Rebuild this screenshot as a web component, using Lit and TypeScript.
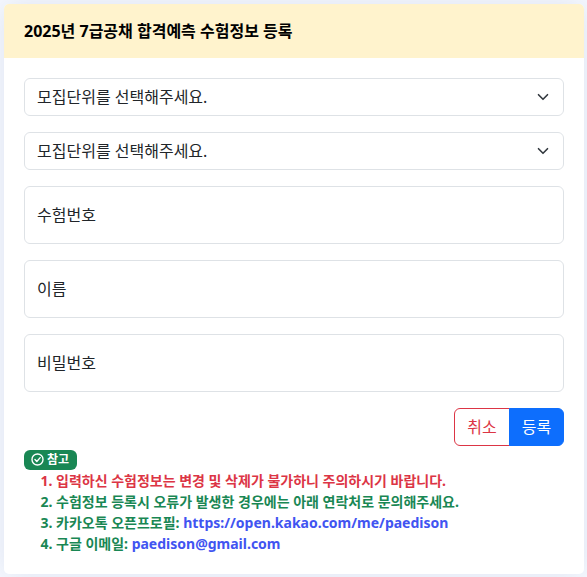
import { LitElement, html, css } from "lit";
import { customElement } from "lit/decorators.js";

const SELECT_PROMPT = "모집단위를 선택해주세요.";
const FIELDS = [
  { label: "수험번호", type: "text" },
  { label: "이름", type: "text" },
  { label: "비밀번호", type: "password" },
];

@customElement("app-root")
export class AppRoot extends LitElement {
  static styles = css`
    :host {
      display: block;
      box-sizing: border-box;
      height: 577px;
      padding: 4px 3px 3px 4px;
      background: #f6f9ff;
      overflow: hidden;
      font-family: "Noto Sans", "Noto Sans CJK KR", sans-serif;
      font-size: 16px;
      line-height: 24px;
      color: #212529;
    }
    * {
      box-sizing: border-box;
    }
    .card {
      height: 570px;
      border-radius: 5px;
      background: #fff;
      box-shadow: 0 0 30px rgba(1, 41, 112, 0.1);
      overflow: hidden;
    }
    .head {
      height: 54px;
      margin: 0;
      padding: 15px 20px;
      background: #fff3cd;
      color: #000;
      font-size: 16px;
      font-weight: 700;
      line-height: 24px;
    }
    .body {
      display: flex;
      flex-direction: column;
      padding: 20px;
    }
    .form {
      display: flex;
      flex-direction: column;
      gap: 16px;
    }
    .pick {
      display: grid;
      align-items: center;
    }
    .pick > * {
      grid-area: 1 / 1;
    }
    .chevron {
      justify-self: end;
      width: 16px;
      height: 12px;
      margin-right: 13px;
      pointer-events: none;
    }
    .control {
      width: 100%;
      height: 38px;
      margin: 0;
      padding: 0 12px;
      border: 1px solid #dee2e6;
      border-radius: 6px;
      background: #fff;
      color: #212529;
      font: inherit;
      appearance: none;
      outline: none;
    }
    .tall {
      height: 58px;
    }
    .control::placeholder {
      color: #212529;
      opacity: 1;
    }
    .actions {
      display: flex;
      justify-content: flex-end;
    }
    .btn {
      width: 55px;
      height: 38px;
      padding: 0;
      border: 1px solid #0d6efd;
      border-radius: 0 6px 6px 0;
      background: #0d6efd;
      color: #fff;
      font: inherit;
    }
    .cancel {
      width: 56px;
      margin-right: -1px;
      border-color: #dc3545;
      border-radius: 6px 0 0 6px;
      background: #fff;
      color: #dc3545;
    }
    .badge {
      display: flex;
      align-items: center;
      align-self: flex-start;
      gap: 3px;
      width: 53px;
      height: 20px;
      margin-top: 4px;
      padding-left: 7px;
      border-radius: 6px;
      background: #198754;
      color: #fff;
      font-size: 12px;
      font-weight: 700;
      line-height: 20px;
    }
    .check {
      margin-top: -1px;
    }
    .notes {
      margin: 0;
      padding: 0 0 0 32px;
      color: #198754;
      font-size: 14px;
      font-weight: 700;
      line-height: 21px;
    }
    .warn {
      color: #dc3545;
    }
    .link {
      color: #4154f1;
      text-decoration: none;
    }
  `;

  private select() {
    return html`<div class="pick">
      <select class="control"><option>${SELECT_PROMPT}</option></select>
      <svg class="chevron" viewBox="0 0 16 16" preserveAspectRatio="xMidYMid meet" fill="none">
        <path d="m2 5 6 6 6-6" stroke="#343a40" stroke-width="2.2" stroke-linecap="round" stroke-linejoin="round" />
      </svg>
    </div>`;
  }

  render() {
    return html`<section class="card">
      <h1 class="head">2025년 7급공채 합격예측 수험정보 등록</h1>
      <div class="body">
        <form class="form">
          ${this.select()} ${this.select()}
          ${FIELDS.map((f) => html`<input class="control tall" type=${f.type} placeholder=${f.label} />`)}
          <div class="actions">
            <button class="btn cancel" type="button">취소</button>
            <button class="btn" type="button">등록</button>
          </div>
        </form>
        <span class="badge">
          <svg class="check" width="13" height="13" viewBox="0 0 16 16" fill="none" stroke="currentColor" stroke-width="1.7">
            <circle cx="8" cy="8" r="6.8" />
            <path d="M4.9 8 7.2 10.4 11.3 5.7" stroke-linecap="round" stroke-linejoin="round" />
          </svg>참고</span>
        <ol class="notes">
          <li class="warn">입력하신 수험정보는 변경 및 삭제가 불가하니 주의하시기 바랍니다.</li>
          <li>수험정보 등록시 오류가 발생한 경우에는 아래 연락처로 문의해주세요.</li>
          <li>카카오톡 오픈프로필: <a class="link" href="https://open.kakao.com/me/paedison">https://open.kakao.com/me/paedison</a></li>
          <li>구글 이메일: <a class="link" href="mailto:paedison@gmail.com">paedison@gmail.com</a></li>
        </ol>
      </div>
    </section>`;
  }
}
